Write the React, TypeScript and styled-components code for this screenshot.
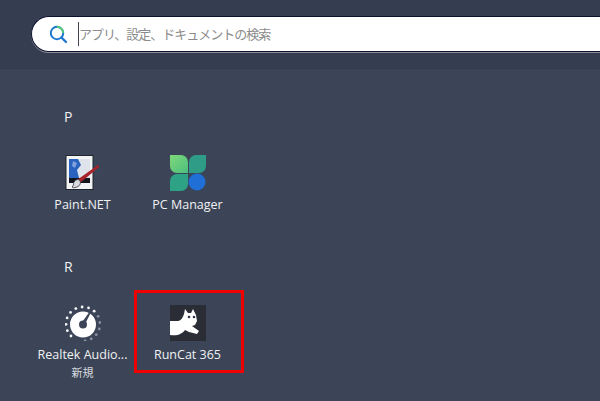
import styled, { createGlobalStyle } from "styled-components";

const GlobalStyle = createGlobalStyle`
  html, body {
    margin: 0;
    width: 600px;
    height: 401px;
    overflow: hidden;
    background: #3c4557;
  }
`;

const Page = styled.div`
  width: 600px;
  height: 401px;
  overflow: hidden;
  font-family: "Open Sans", "Noto Sans CJK JP", sans-serif;
  color: #f0f1f3;
`;

const Header = styled.header`
  box-sizing: border-box;
  height: 69px;
  padding: 16px 0 0 31px;
  background: #353d50;
  border-bottom: 1px solid #323949;
`;

const SearchBar = styled.div`
  box-sizing: border-box;
  height: 36px;
  display: flex;
  align-items: center;
  gap: 10px;
  padding-left: 16px;
  background: #fff;
  border: 1px solid #0d1030;
  border-right: none;
  border-radius: 18px 0 0 18px;
  box-shadow: 0 1px 0 #8b8e96;
`;

const Placeholder = styled.span`
  height: 24px;
  line-height: 24px;
  border-left: 1px solid #3f4450;
  font-size: 13px;
  letter-spacing: -1px;
  color: #8b8b8b;
  white-space: nowrap;
`;

const Content = styled.main`
  padding: 38px 0 0 30px;
`;

const Section = styled.section`
  height: 150px;
`;

const Letter = styled.div`
  height: 20px;
  padding-left: 34px;
  font-size: 14px;
  line-height: 20px;
`;

const Grid = styled.div`
  display: flex;
  margin-top: 28px;
`;

const Tile = styled.div<{ $marked?: boolean }>`
  position: relative;
  width: 105px;
  display: flex;
  flex-direction: column;
  align-items: center;

  ${(props) =>
    props.$marked &&
    `&::after {
      content: "";
      position: absolute;
      left: -1px;
      top: -15px;
      width: 104px;
      height: 77px;
      border: 3px solid #f00000;
    }`}
`;

const IconBox = styled.div`
  width: 36px;
  height: 36px;
  svg {
    display: block;
  }
`;

const Label = styled.div`
  margin-top: 5px;
  font-size: 12.5px;
  line-height: 18px;
  white-space: nowrap;
`;

const Badge = styled.div`
  font-size: 11px;
  line-height: 18px;
  color: #d8dade;
`;

const SearchIcon = () => (
  <svg width="20" height="20" viewBox="0 0 20 20" fill="none">
    <circle cx="9" cy="9" r="6.2" stroke="#1f78d0" strokeWidth="2" />
    <path d="M9 2.8a6.2 6.2 0 0 1 6.2 6.2" stroke="#55c97a" strokeWidth="2" />
    <path d="M13.5 13.5 18 18" stroke="#1f78d0" strokeWidth="2.4" strokeLinecap="round" />
  </svg>
);

const PaintNetIcon = () => (
  <svg width="36" height="36" viewBox="0 0 36 36">
    <rect x="1" y="0.5" width="27" height="34" fill="#f2f3f5" stroke="#20242c" />
    <rect x="4" y="4" width="21" height="19" fill="#dfe4ec" />
    <path d="M4 4h9l3 6-4 5 2 8H4z" fill="#2a62c0" />
    <path d="M8 6l4 2-2 5-3-2z" fill="#7fa2dc" />
    <rect x="4" y="23" width="21" height="5" fill="#12151c" />
    <path d="M12 25 33 10l1.4 1.8L15 28z" fill="#a8242c" />
    <path d="M9 27c2-3 5-3 6-1s0 5-3 6-4 1-5 0c2-1 1-3 2-5z" fill="#d8dade" stroke="#30343c" strokeWidth=".8" />
  </svg>
);

const PcManagerIcon = () => (
  <svg width="36" height="36" viewBox="0 0 36 36">
    <defs>
      <linearGradient id="leaf" x1="0" y1="0" x2="1" y2="1">
        <stop offset="0" stopColor="#7fd878" />
        <stop offset="1" stopColor="#4cbf80" />
      </linearGradient>
    </defs>
    <path d="M0 0h11a7 7 0 0 1 7 7v11H7a7 7 0 0 1-7-7z" fill="url(#leaf)" />
    <path d="M36 0H26a7 7 0 0 0-7 7v11h10a7 7 0 0 0 7-7z" fill="#2f9c87" />
    <path d="M0 36h11a7 7 0 0 0 7-7V19H7a7 7 0 0 0-7 7z" fill="#2ea285" />
    <circle cx="27" cy="27" r="8.5" fill="#1f6fd6" />
  </svg>
);

const RealtekIcon = () => {
  const dots = Array.from({ length: 15 }, (_, i) => {
    const angle = ((-135 + i * 22) * Math.PI) / 180;
    return {
      x: 18 + 17 * Math.sin(angle),
      y: 19 - 17 * Math.cos(angle),
      fill: i > 8 ? "#8a90a0" : "#f4f5f6",
    };
  });
  return (
    <svg width="36" height="36" viewBox="0 0 36 36">
      {dots.map((dot, i) => (
        <circle key={i} cx={dot.x} cy={dot.y} r="1.4" fill={dot.fill} />
      ))}
      <circle cx="18" cy="19.5" r="8.5" fill="none" stroke="#fff" strokeWidth="9" />
      <path d="M16.5 18 24 7.5l1.4 1L19.5 20z" fill="#3c4557" />
    </svg>
  );
};

const RunCatIcon = () => (
  <svg width="36" height="36" viewBox="0 0 36 36">
    <rect width="36" height="36" fill="#2b2d36" />
    <path
      d="M0 16h8c3 0 5-4 6-7l1-5 3 4h3l2-4 3 6 1 6-2 4-3 1 7 5-2 3-8-2-4-2c-3 4-7 6-15 5z"
      fill="#fff"
    />
    <circle cx="19" cy="12" r="1.3" fill="#30344a" />
    <circle cx="24" cy="12" r="1.3" fill="#30344a" />
  </svg>
);

const App = () => (
  <Page>
    <GlobalStyle />
    <Header>
      <SearchBar>
        <SearchIcon />
        <Placeholder>アプリ、設定、ドキュメントの検索</Placeholder>
      </SearchBar>
    </Header>
    <Content>
      <Section>
        <Letter>P</Letter>
        <Grid>
          <Tile>
            <IconBox><PaintNetIcon /></IconBox>
            <Label>Paint.NET</Label>
          </Tile>
          <Tile>
            <IconBox><PcManagerIcon /></IconBox>
            <Label>PC Manager</Label>
          </Tile>
        </Grid>
      </Section>
      <Section>
        <Letter>R</Letter>
        <Grid>
          <Tile>
            <IconBox><RealtekIcon /></IconBox>
            <Label>Realtek Audio...</Label>
            <Badge>新規</Badge>
          </Tile>
          <Tile $marked>
            <IconBox><RunCatIcon /></IconBox>
            <Label>RunCat 365</Label>
          </Tile>
        </Grid>
      </Section>
    </Content>
  </Page>
);

export default App;
